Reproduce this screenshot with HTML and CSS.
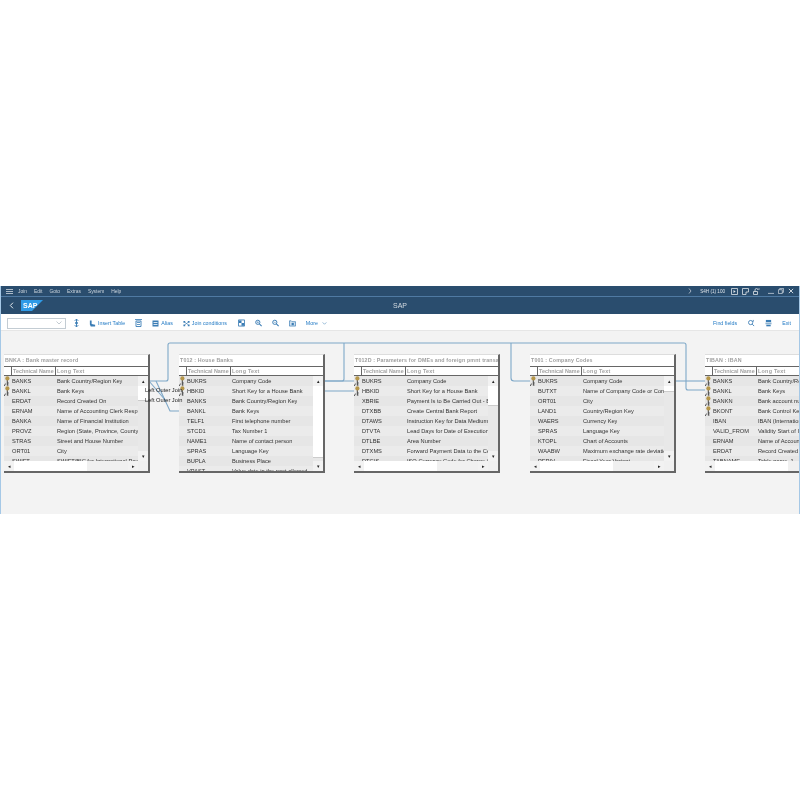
FILE: index.html
```html
<!DOCTYPE html>
<html lang="en">
<head>
  <meta charset="UTF-8">
  <meta name="viewport" content="width=device-width, initial-scale=1.0">
  <title>SAP</title>
  <link rel="stylesheet" href="styles.css">
</head>
<body>
  <svg class="defs" width="0" height="0">
    <symbol id="key" viewBox="0 0 8 11">
      <path d="M3.300 4v5.500M3.300 7h1.400M3.300 9h1.200" stroke="#444" stroke-width="1" fill="none"/>
      <circle cx="3.400" cy="2.400" r="2.100" fill="#b5964a"/>
      <path d="M0 10.600L1.500 7.600" stroke="#444" stroke-width=".9" fill="none"/>
    </symbol>
  </svg>

  <div class="window">
    <div class="menubar">
      <svg class="hamburger" viewBox="0 0 7 5"><path d="M0 .5h7M0 2.5h7M0 4.5h7" stroke="#cfd8e0" stroke-width=".8"/></svg>
      <nav class="menu">
        <span>Join</span><span>Edit</span><span>Goto</span><span>Extras</span><span>System</span><span>Help</span>
      </nav>
      <div class="sysinfo">
        <svg class="sys-chev" viewBox="0 0 4 6"><path d="M1 .5L3 3L1 5.5" stroke="#d5dde4" fill="none" stroke-width=".7"/></svg>
        <span class="sysname">S4H (1) 100</span>
        <svg class="sys-icon" viewBox="0 0 7 7"><path d="M.5.5h6v6h-6z" stroke="#dde3e9" fill="none" stroke-width=".8"/><path d="M2.5 2l2.2 1.5L2.5 5z" fill="#dde3e9"/></svg>
        <svg class="sys-icon" viewBox="0 0 7 7"><path d="M.5.5h6v3.5H4v2.5H.5z" stroke="#dde3e9" fill="none" stroke-width=".8"/></svg>
        <svg class="sys-icon" viewBox="0 0 7 7"><path d="M.5 3.5h4v3h-4zM2 3.5V2a1.5 1.5 0 013 0" stroke="#dde3e9" fill="none" stroke-width=".8"/><path d="M5 1h2" stroke="#dde3e9" stroke-width=".6"/></svg>
        <svg class="win-min" viewBox="0 0 7 7"><path d="M0 6.3h7" stroke="#b9c6d2"/></svg>
        <svg class="win-icon" viewBox="0 0 7 7"><path d="M.5 2h4.5v4.500H.5zM2 2V.5h4.500V5H5" stroke="#dde3e9" fill="none" stroke-width=".8"/></svg>
        <svg class="win-icon" viewBox="0 0 7 7"><path d="M1 1l5 5M6 1L1 6" stroke="#e6ebef" stroke-width="1"/></svg>
      </div>
    </div>

    <header class="titlebar">
      <svg class="back" viewBox="0 0 5 7"><path d="M4 .7L1.300 3.500L4 6.300" stroke="#e3e8ed" stroke-width="1" fill="none"/></svg>
      <div class="logo"><span>SAP</span></div>
      <div class="title">SAP</div>
    </header>

    <div class="toolbar">
      <div class="combo">
        <svg viewBox="0 0 6 4"><path d="M.5.5L3 3L5.500.5" stroke="#a9b4bd" fill="none" stroke-width=".7"/></svg>
      </div>
      <svg class="tb-icon tb-first" viewBox="0 0 8 9"><path d="M4 0v9M2 2l2-2 2 2M2 7l2 2 2-2" stroke="#3b7db5" fill="none" stroke-width="1.100"/><path d="M2.500 3.500h3v2h-3z" fill="#3b7db5"/></svg>
      <button class="tb-btn tb-insert">
        <svg viewBox="0 0 8 8"><path d="M1 .5l2 0v4l4 1v2H2L1 5z" fill="#3b7db5"/></svg>
        Insert Table
      </button>
      <svg class="tb-icon tb-delete" viewBox="0 0 7 8"><path d="M0 .6h7M1 2h5v5.500H1z" stroke="#3b7db5" fill="none" stroke-width=".9"/><path d="M2 3.500h3M2 5.500h3" stroke="#3b7db5" stroke-width=".8"/></svg>
      <button class="tb-btn tb-alias">
        <svg viewBox="0 0 7 7"><path d="M.5.500h6v6h-6z" fill="#3b7db5"/><path d="M1.500 2.500h4M1.500 4.500h4" stroke="#fff" stroke-width=".8"/></svg>
        Alias
      </button>
      <button class="tb-btn tb-join">
        <svg viewBox="0 0 8 7"><path d="M.5.500h2v2h-2zM5.500.500h2v2h-2zM.5 4.500h2v2h-2zM5.500 4.500h2v2h-2z" fill="#3b7db5"/><path d="M2 2l4 3M6 2L2 5" stroke="#3b7db5" stroke-width=".7"/></svg>
        Join conditions
      </button>
      <svg class="tb-icon tb-layout" viewBox="0 0 8 8"><path d="M.5.500h7v7h-7z" stroke="#3b7db5" fill="none"/><path d="M1 1h3v3H1zM4 4h3v3H4z" fill="#3b7db5"/></svg>
      <svg class="tb-icon tb-zoom" viewBox="0 0 8 8"><circle cx="3.200" cy="3.200" r="2.400" stroke="#3b7db5" fill="none" stroke-width="1.100"/><path d="M5 5l2.600 2.600" stroke="#3b7db5" stroke-width="1.300"/><path d="M2 3.200h2.400M3.200 2v2.400" stroke="#3b7db5" stroke-width=".6"/></svg>
      <svg class="tb-icon tb-zoom" viewBox="0 0 8 8"><circle cx="3.200" cy="3.200" r="2.400" stroke="#3b7db5" fill="none" stroke-width="1.100"/><path d="M5 5l2.600 2.600" stroke="#3b7db5" stroke-width="1.300"/><path d="M2 3.200h2.400" stroke="#3b7db5" stroke-width=".6"/></svg>
      <svg class="tb-icon tb-zoom" viewBox="0 0 8 8"><path d="M.5 1.500h2l1 1h4v5h-7z" stroke="#3b7db5" fill="#cfe0ee" stroke-width=".8"/><path d="M3 4h2.500v2.500H3z" fill="#3b7db5"/></svg>
      <button class="tb-btn tb-more">
        More
        <svg class="chev" viewBox="0 0 6 4"><path d="M.5.500L3 3L5.500.500" stroke="#3b7db5" fill="none" stroke-width=".7"/></svg>
      </button>
      <div class="tb-right">
        <button class="tb-btn">Find fields</button>
        <svg class="tb-icon tb-find" viewBox="0 0 8 8"><circle cx="3" cy="3.500" r="2.400" stroke="#3b7db5" fill="none"/><path d="M4.800 5.300L7 7.500M6 .5v2" stroke="#3b7db5"/></svg>
        <svg class="tb-icon tb-print" viewBox="0 0 8 8"><path d="M1 .5h6v2.500H1z" fill="#3b7db5"/><path d="M.5 3.500h7v2h-7z" fill="#8fb3d0"/><path d="M1.500 6h5v1.800h-5z" fill="#3b7db5"/></svg>
        <button class="tb-btn tb-exit">Exit</button>
      </div>
    </div>

    <main class="canvas">
      <svg class="links" width="800" height="183" viewBox="0 331 800 183">
        <g fill="none" stroke="#7ea8c8" stroke-width="1.100">
          <path d="M149 381H166Q168 381 168 379V345Q168 343 170 343H684Q686 343 686 345V388Q686 390 688 390H705"/>
          <path d="M156 381L170 411H179"/>
          <path d="M149 381L166 401"/>
          <path d="M325 381H342Q344 381 344 379V343"/>
          <path d="M325 391H354M325 381H354"/>
          <path d="M511 343V378Q511 381 514 381H530"/>
          <path d="M676 381H705"/>
        </g>
      </svg>

      <section class="tbl tbl-bnka">
        <div class="tbl-title">BNKA : Bank master record</div>
        <div class="tbl-head"><span class="gutter"></span><span class="th-tech">Technical Name</span><span class="th-long">Long Text</span></div>
        <div class="tbl-body has-hscroll">
          <div class="rows">
            <div class="row"><svg class="key"><use href="#key"/></svg><span class="tech">BANKS</span><span class="long">Bank Country/Region Key</span></div>
            <div class="row"><svg class="key"><use href="#key"/></svg><span class="tech">BANKL</span><span class="long">Bank Keys</span></div>
            <div class="row"><span class="tech">ERDAT</span><span class="long">Record Created On</span></div>
            <div class="row"><span class="tech">ERNAM</span><span class="long">Name of Accounting Clerk Resp</span></div>
            <div class="row"><span class="tech">BANKA</span><span class="long">Name of Financial Institution</span></div>
            <div class="row"><span class="tech">PROVZ</span><span class="long">Region (State, Province, County</span></div>
            <div class="row"><span class="tech">STRAS</span><span class="long">Street and House Number</span></div>
            <div class="row"><span class="tech">ORT01</span><span class="long">City</span></div>
            <div class="row"><span class="tech">SWIFT</span><span class="long">SWIFT/BIC for International Pay</span></div>
          </div>
          <div class="vscroll"><span class="sb-btn">&#9652;</span><span class="thumb thumb-bnka"></span><span class="sb-btn sb-end">&#9662;</span></div>
        </div>
        <div class="hscroll"><span class="sb-btn">&#9666;</span><span class="hthumb"></span><span class="sb-btn sb-end">&#9656;</span></div>
      </section>

      <section class="tbl tbl-t012">
        <div class="tbl-title">T012 : House Banks</div>
        <div class="tbl-head"><span class="gutter"></span><span class="th-tech">Technical Name</span><span class="th-long">Long Text</span></div>
        <div class="tbl-body">
          <div class="rows">
            <div class="row"><svg class="key"><use href="#key"/></svg><span class="tech">BUKRS</span><span class="long">Company Code</span></div>
            <div class="row"><svg class="key"><use href="#key"/></svg><span class="tech">HBKID</span><span class="long">Short Key for a House Bank</span></div>
            <div class="row"><span class="tech">BANKS</span><span class="long">Bank Country/Region Key</span></div>
            <div class="row"><span class="tech">BANKL</span><span class="long">Bank Keys</span></div>
            <div class="row"><span class="tech">TELF1</span><span class="long">First telephone number</span></div>
            <div class="row"><span class="tech">STCD1</span><span class="long">Tax Number 1</span></div>
            <div class="row"><span class="tech">NAME1</span><span class="long">Name of contact person</span></div>
            <div class="row"><span class="tech">SPRAS</span><span class="long">Language Key</span></div>
            <div class="row"><span class="tech">BUPLA</span><span class="long">Business Place</span></div>
            <div class="row"><span class="tech">VPAST</span><span class="long">Value date in the past allowed</span></div>
          </div>
          <div class="vscroll"><span class="sb-btn">&#9652;</span><span class="thumb thumb-t012"></span><span class="sb-btn sb-end">&#9662;</span></div>
        </div>
      </section>

      <section class="tbl tbl-t012d">
        <div class="tbl-title">T012D : Parameters for DMEs and foreign pmnt transac</div>
        <div class="tbl-head"><span class="gutter"></span><span class="th-tech">Technical Name</span><span class="th-long">Long Text</span></div>
        <div class="tbl-body has-hscroll">
          <div class="rows">
            <div class="row"><svg class="key"><use href="#key"/></svg><span class="tech">BUKRS</span><span class="long">Company Code</span></div>
            <div class="row"><svg class="key"><use href="#key"/></svg><span class="tech">HBKID</span><span class="long">Short Key for a House Bank</span></div>
            <div class="row"><span class="tech">XBRIE</span><span class="long">Payment Is to Be Carried Out - B</span></div>
            <div class="row"><span class="tech">DTXBB</span><span class="long">Create Central Bank Report</span></div>
            <div class="row"><span class="tech">DTAWS</span><span class="long">Instruction Key for Data Medium</span></div>
            <div class="row"><span class="tech">DTVTA</span><span class="long">Lead Days for Date of Execution</span></div>
            <div class="row"><span class="tech">DTLBE</span><span class="long">Area Number</span></div>
            <div class="row"><span class="tech">DTXMS</span><span class="long">Forward Payment Data to the Ce</span></div>
            <div class="row"><span class="tech">DTGIS</span><span class="long">ISO Currency Code for Charge A</span></div>
          </div>
          <div class="vscroll"><span class="sb-btn">&#9652;</span><span class="thumb thumb-t012d"></span><span class="sb-btn sb-end">&#9662;</span></div>
        </div>
        <div class="hscroll"><span class="sb-btn">&#9666;</span><span class="hthumb"></span><span class="sb-btn sb-end">&#9656;</span></div>
      </section>

      <section class="tbl tbl-t001">
        <div class="tbl-title">T001 : Company Codes</div>
        <div class="tbl-head"><span class="gutter"></span><span class="th-tech">Technical Name</span><span class="th-long">Long Text</span></div>
        <div class="tbl-body has-hscroll">
          <div class="rows">
            <div class="row"><svg class="key"><use href="#key"/></svg><span class="tech">BUKRS</span><span class="long">Company Code</span></div>
            <div class="row"><span class="tech">BUTXT</span><span class="long">Name of Company Code or Com</span></div>
            <div class="row"><span class="tech">ORT01</span><span class="long">City</span></div>
            <div class="row"><span class="tech">LAND1</span><span class="long">Country/Region Key</span></div>
            <div class="row"><span class="tech">WAERS</span><span class="long">Currency Key</span></div>
            <div class="row"><span class="tech">SPRAS</span><span class="long">Language Key</span></div>
            <div class="row"><span class="tech">KTOPL</span><span class="long">Chart of Accounts</span></div>
            <div class="row"><span class="tech">WAABW</span><span class="long">Maximum exchange rate deviation</span></div>
            <div class="row"><span class="tech">PERIV</span><span class="long">Fiscal Year Variant</span></div>
          </div>
          <div class="vscroll"><span class="sb-btn">&#9652;</span><span class="thumb thumb-t001"></span><span class="sb-btn sb-end">&#9662;</span></div>
        </div>
        <div class="hscroll"><span class="sb-btn">&#9666;</span><span class="hthumb"></span><span class="sb-btn sb-end">&#9656;</span></div>
      </section>

      <section class="tbl tbl-tiban">
        <div class="tbl-title">TIBAN : IBAN</div>
        <div class="tbl-head"><span class="gutter"></span><span class="th-tech">Technical Name</span><span class="th-long">Long Text</span></div>
        <div class="tbl-body has-hscroll">
          <div class="rows">
            <div class="row"><svg class="key"><use href="#key"/></svg><span class="tech">BANKS</span><span class="long">Bank Country/Region Key</span></div>
            <div class="row"><svg class="key"><use href="#key"/></svg><span class="tech">BANKL</span><span class="long">Bank Keys</span></div>
            <div class="row"><svg class="key"><use href="#key"/></svg><span class="tech">BANKN</span><span class="long">Bank account number</span></div>
            <div class="row"><svg class="key"><use href="#key"/></svg><span class="tech">BKONT</span><span class="long">Bank Control Key</span></div>
            <div class="row"><span class="tech">IBAN</span><span class="long">IBAN (International Bank)</span></div>
            <div class="row"><span class="tech">VALID_FROM</span><span class="long">Validity Start of IBAN</span></div>
            <div class="row"><span class="tech">ERNAM</span><span class="long">Name of Accounting Clerk</span></div>
            <div class="row"><span class="tech">ERDAT</span><span class="long">Record Created On</span></div>
            <div class="row"><span class="tech">TABNAME</span><span class="long">Table name, 1</span></div>
          </div>
        </div>
        <div class="hscroll"><span class="sb-btn">&#9666;</span><span class="hthumb"></span></div>
      </section>

      <span class="join-label join-1">Left Outer Join</span>
      <span class="join-label join-2">Left Outer Join</span>
    </main>
  </div>
</body>
</html>
```

FILE: styles.css
```css
body {
  margin: 0;
  height: 800px;
  padding-top: 286px;
  box-sizing: border-box;
  background: #fff;
  font-family: "Liberation Sans", Arial, sans-serif;
  overflow: hidden;
}
.defs {
  position: absolute;
}
.window {
  height: 228px;
  display: flex;
  flex-direction: column;
  border-left: 1px solid #a5c8e6;
  border-right: 1px solid #a5c8e6;
  filter: blur(0.35px);
}

/* shell */
.menubar {
  height: 11px;
  flex: none;
  box-sizing: border-box;
  display: flex;
  align-items: center;
  background: #2a4d6e;
  border-bottom: 1px solid #4f7aa3;
  color: #cdd6de;
  font-size: 4.900px;
}
.hamburger {
  width: 7px;
  height: 5px;
  margin-left: 5px;
}
.menu {
  display: flex;
  margin-left: 5px;
  gap: 7px;
}
.sysinfo {
  margin-left: auto;
  display: flex;
  align-items: center;
}
.sys-chev {
  width: 4px;
  height: 6px;
  margin-right: 8px;
}
.sysname {
  font-size: 4.600px;
  margin-right: 5.500px;
  color: #dde3e9;
}
.sys-icon {
  width: 7px;
  height: 7px;
  margin-right: 4px;
}
.win-min, .win-icon {
  width: 6px;
  height: 6px;
  margin-left: 4px;
}
.win-min {
  margin-left: 4.500px;
}
.win-icon:last-child {
  margin-right: 5px;
}
.titlebar {
  height: 17px;
  flex: none;
  position: relative;
  display: flex;
  align-items: center;
  background: #2a4d6e;
  color: #d3dae1;
}
.back {
  width: 5px;
  height: 7px;
  margin-left: 8px;
}
.logo {
  width: 22px;
  height: 11px;
  margin-left: 7px;
  background: #2f9be8;
  clip-path: polygon(0 0, 100% 0, 50% 100%, 0 100%);
  color: #fff;
  font-size: 7px;
  font-weight: bold;
  line-height: 11px;
  padding-left: 2px;
  box-sizing: border-box;
}
.title {
  position: absolute;
  left: 0;
  right: 0;
  text-align: center;
  font-size: 7px;
}

/* toolbar */
.toolbar {
  height: 17px;
  flex: none;
  box-sizing: border-box;
  padding-top: 2px;
  display: flex;
  align-items: center;
  background: #fff;
  border-bottom: 1px solid #e6e6e6;
  color: #1f78c4;
  font-size: 5.300px;
}
.combo {
  width: 57px;
  height: 9px;
  margin-left: 6px;
  display: flex;
  align-items: center;
  justify-content: flex-end;
  border: 1px solid #c3ccd3;
}
.combo svg {
  width: 6px;
  height: 4px;
  margin-right: 3px;
}
.tb-btn {
  display: flex;
  align-items: center;
  gap: 2px;
  padding: 0;
  border: none;
  background: none;
  color: inherit;
  font: inherit;
}
.tb-btn svg {
  width: 7px;
  height: 7px;
}
.tb-icon {
  width: 7px;
  height: 8px;
}
.tb-first {
  margin-left: 7px;
}
.tb-insert {
  margin-left: 9px;
}
.tb-delete {
  margin-left: 10px;
}
.tb-alias {
  margin-left: 10px;
}
.tb-join {
  margin-left: 10px;
}
.tb-layout {
  margin-left: 11px;
}
.tb-zoom {
  margin-left: 10px;
}
.tb-more {
  margin-left: 10px;
}
.tb-btn .chev {
  width: 5px;
  height: 3px;
  margin-left: 2px;
}
.tb-right {
  margin-left: auto;
  display: flex;
  align-items: center;
}
.tb-find {
  margin-left: 11px;
}
.tb-print {
  margin-left: 10px;
}
.tb-exit {
  margin-left: 10px;
  margin-right: 8px;
}

/* diagram */
.canvas {
  flex: 1;
  position: relative;
  overflow: hidden;
  background: #f3f3f3;
}
.links {
  position: absolute;
  left: -1px;
  top: 0;
}
.tbl {
  position: absolute;
  top: 23px;
  width: 146px;
  height: 119px;
  display: flex;
  flex-direction: column;
  box-sizing: border-box;
  background: #fff;
  border-right: 2px solid #666;
  border-bottom: 2px solid #666;
  border-top: 1px solid #ddd;
  font-size: 5.700px;
  color: #333;
}
.tbl-bnka { left: 3px; }
.tbl-t012 { left: 178px; }
.tbl-t012d { left: 353px; }
.tbl-t001 { left: 529px; }
.tbl-tiban { left: 704px; }
.tbl-title {
  height: 11px;
  flex: none;
  line-height: 11px;
  padding-left: 1px;
  white-space: nowrap;
  overflow: hidden;
  color: #a0a0a0;
  font-weight: bold;
  font-size: 5.300px;
  letter-spacing: 0.15px;
}
.tbl-head {
  height: 8px;
  flex: none;
  display: flex;
  border-top: 1px solid #666;
  border-bottom: 1px solid #666;
  line-height: 8px;
  color: #a3a3a3;
  font-weight: bold;
  font-size: 5.400px;
}
.gutter {
  width: 7px;
  border-right: 1px solid #666;
}
.th-tech {
  width: 44px;
  padding-left: 1px;
  border-right: 1px solid #666;
  box-sizing: border-box;
  white-space: nowrap;
}
.th-long {
  padding-left: 1px;
  letter-spacing: 0.25px;
}
.tbl-body {
  flex: 1;
  min-height: 0;
  display: flex;
  overflow: hidden;
}
.rows {
  flex: 1;
  min-width: 0;
  overflow: hidden;
}
.row {
  height: 10px;
  position: relative;
  display: flex;
  align-items: center;
  background: #e6e6e6;
  white-space: nowrap;
}
.row:nth-child(even) {
  background: #ebebeb;
}
.key {
  position: absolute;
  left: 0;
  top: 0;
  width: 8px;
  height: 11px;
}
.tech {
  width: 45px;
  flex: none;
  margin-left: 8px;
}
.long {
  overflow: hidden;
}
.vscroll {
  width: 10px;
  flex: none;
  display: flex;
  flex-direction: column;
  background: #e8e8e8;
}
.sb-btn {
  width: 10px;
  height: 10px;
  flex: none;
  display: flex;
  align-items: center;
  justify-content: center;
  background: #f2f2f2;
  color: #222;
  font-size: 5px;
}
.vscroll .sb-end {
  margin-top: auto;
}
.thumb {
  flex: none;
  background: #fff;
  border-bottom: 1px solid #ccc;
}
.thumb-bnka { height: 14px; }
.thumb-t012 { height: 71px; }
.thumb-t012d { height: 19px; }
.thumb-t001 { height: 5px; }
.hscroll {
  height: 10px;
  flex: none;
  display: flex;
  background: #f0f0f0;
}
.hthumb {
  width: 73px;
  background: #fff;
}
.hscroll .sb-end {
  margin-left: auto;
  margin-right: 10px;
}
.join-label {
  position: absolute;
  left: 144px;
  height: 9px;
  line-height: 9px;
  color: #222;
  font-size: 5.700px;
  white-space: nowrap;
}
.join-1 { top: 55px; }
.join-2 { top: 65px; }
```
